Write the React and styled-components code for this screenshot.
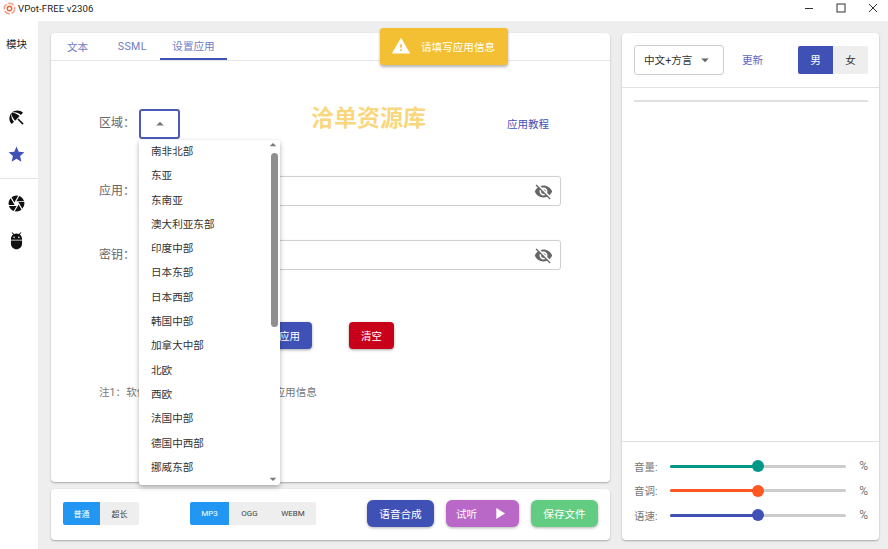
import React from 'react';
import styled, { createGlobalStyle } from 'styled-components';
import { MdBeachAccess, MdStar, MdCamera, MdAdb, MdVisibilityOff, MdWarning, MdPlayArrow, MdArrowDropUp, MdArrowDropDown } from 'react-icons/md';

const Global = createGlobalStyle`
  html, body { margin: 0; padding: 0; height: 100%; overflow: hidden; background: #fff; }
  body { font-family: Roboto, "Noto Sans CJK SC", sans-serif; }
  #root { height: 100%; }
  * { box-sizing: border-box; }
`;

const Win = styled.div`width: 888px; height: 549px; display: flex; flex-direction: column; position: relative; overflow: hidden;`;
const TitleBar = styled.div`height: 21px; flex: none; display: flex; align-items: center; background: #fff; padding: 0 0 5px 3px;`;
const TitleText = styled.span`font: 9.6px Roboto, "Noto Sans", sans-serif; color: #222; margin-left: 2px; letter-spacing: 0.1px;`;
const WinButtons = styled.div`margin-left: auto; display: flex; align-items: center; height: 100%; padding-right: 9px; gap: 21.5px;`;
const Body = styled.div`flex: 1; display: flex; min-height: 0;`;
const Side = styled.aside`width: 38px; flex: none; background: #fff; display: flex; flex-direction: column; align-items: center;`;
const SideTitle = styled.div`font-size: 10.5px; color: #222; margin: 17px 0 0 -5px; height: 60.5px; line-height: 14px;`;
const SideIcon = styled.div`height: 37px; width: 100%; flex: none; display: flex; align-items: center; justify-content: center; padding-right: 5px; color: ${p => p.$c || '#111'}; font-size: 19px;`;
const SideRule = styled.div`width: 100%; height: 1px; background: #e4e4e4; margin: 5px 0 6px;`;
const Content = styled.main`flex: 1; background: #eeeeee; padding: 12px 9px 9px 13px; display: grid; grid-template-columns: 559px 257px; grid-template-rows: 449px 51px; column-gap: 12px; row-gap: 7px;`;
const Card = styled.section`background: #fff; border-radius: 4px; box-shadow: 0 1px 2px rgba(0,0,0,.3);`;
const MainCard = styled(Card)`display: flex; flex-direction: column; position: relative;`;
const Tabs = styled.div`height: 28px; flex: none; display: flex; border-bottom: 1px solid #e6e6e6; padding-left: 4px;`;
const Tab = styled.div`height: 27px; padding: 0 ${p => p.$r}px 1px ${p => p.$l}px; display: flex; align-items: center; font-size: 10.6px; letter-spacing: ${p => p.$ls || 0}px; color: #6f7cc4; border-bottom: ${p => p.$on ? '2px solid #3f51b5' : 'none'};`;
const Form = styled.div`padding: 48px 48px 0 48px; display: flex; flex-direction: column;`;
const Row = styled.div`display: flex; align-items: center; height: 30px; margin-bottom: ${p => p.$mb || 0}px;`;
const Label = styled.label`width: 40px; flex: none; font-size: 12px; color: #666; margin-bottom: ${p => p.$up || 3}px;`;
const RegionBox = styled.div`width: 41px; height: 30px; border: 2px solid #4a5bbd; border-radius: 3px; display: flex; align-items: center; justify-content: center; color: #777; font-size: 18px;`;
const Watermark = styled.div`font-size: 23px; font-weight: 700; color: #f9d77e; margin-left: 131px; margin-top: -10px; line-height: 30px;`;
const Tutorial = styled.a`font-size: 10.5px; color: #3f51b5; margin-left: auto; margin-top: -2px; margin-right: 13px;`;
const Field = styled.div`width: 422px; height: 30px; border: 1px solid #cfcfcf; border-radius: 3px; display: flex; align-items: center; justify-content: flex-end; padding-right: 7px; color: #666; font-size: 19px; box-shadow: 0 0 1px rgba(0,0,0,.15);`;
const Actions = styled.div`display: flex; margin: 52px 0 0 0; padding-left: 0; height: 27px;`;
const PrimaryBtn = styled.button`border: 0; width: 100px; height: 27px; margin-left: 113px; border-radius: 4px; background: #3f51b5; color: #fff; font: 10.5px Roboto, "Noto Sans CJK SC", sans-serif; box-shadow: 0 1px 3px rgba(0,0,0,.35); text-align: right; padding-right: 12px;`;
const DangerBtn = styled.button`border: 0; width: 45px; height: 27px; margin-left: 37px; border-radius: 4px; background: #c8001a; color: #fff; font: 10.5px Roboto, "Noto Sans CJK SC", sans-serif; box-shadow: 0 1px 3px rgba(0,0,0,.35);`;
const Note = styled.p`margin: 36px 0 0; font-size: 10.6px; color: #777; line-height: 16px;`;

const Toast = styled.div`position: absolute; left: 329px; top: -5px; width: 128px; height: 37px; background: #f4c033; border-radius: 3px; box-shadow: 0 2px 3px rgba(0,0,0,.3); color: #fff; display: flex; align-items: center; padding: 0 0 1px 11px; font-size: 10.6px; z-index: 4;`;
const ToastIcon = styled.span`font-size: 20px; display: flex; margin-right: 10px;`;
const Menu = styled.div`position: absolute; left: 88px; top: 107px; width: 141px; height: 345px; background: #fff; border-radius: 3px; box-shadow: 0 2px 5px rgba(0,0,0,.3); z-index: 3; overflow: hidden;`;
const MenuItem = styled.div`height: 24.3px; line-height: 24.3px; padding-left: 12px; font-size: 10.6px; color: #333;`;
const ScrollArrow = styled.span`position: absolute; right: -1px; ${p => p.$up ? 'top: -3px;' : 'bottom: -2px;'} color: #777; font-size: 16px; display: flex;`;
const Thumb = styled.div`position: absolute; right: 2px; top: 13px; width: 7px; height: 174px; background: #8f8f8f; border-radius: 4px;`;

const BottomCard = styled(Card)`display: flex; align-items: center; padding: 0 12px 2px;`;
const Toggle = styled.div`display: flex; height: 23px; margin-right: ${p => p.$mr || 0}px;`;
const ToggleBtn = styled.div`width: ${p => p.$w}px; display: flex; align-items: center; justify-content: center; font-size: 8px; background: ${p => p.$on ? '#2196f3' : '#eeeeee'}; color: ${p => p.$on ? '#fff' : '#444'}; border-radius: ${p => p.$first ? '2px 0 0 2px' : p.$last ? '0 2px 2px 0' : '0'};`;
const ActionBtn = styled.button`border: 0; height: 27px; width: ${p => p.$w}px; margin-left: ${p => p.$ml || 0}px; border-radius: 6px; background: ${p => p.$bg}; color: #fff; display: flex; align-items: center; justify-content: center; font: 10.6px Roboto, "Noto Sans CJK SC", sans-serif; box-shadow: 0 1px 3px rgba(0,0,0,.3); padding: 0;`;
const PlayIcon = styled.span`font-size: 19px; display: flex; margin-left: 13px;`;

const RightCard = styled(Card)`grid-column: 2; grid-row: 1 / span 2; display: flex; flex-direction: column;`;
const RightHead = styled.div`height: 55px; flex: none; display: flex; align-items: center; padding: 0 11px 1px 12px; border-bottom: 1px solid #e2e2e2;`;
const LangSelect = styled.div`width: 90px; height: 30px; border: 1px solid #cfcfcf; border-radius: 3px; display: flex; align-items: center; padding-left: 9px; font-size: 10.6px; color: #333;`;
const Caret = styled.span`margin-left: auto; margin-right: 9px; color: #666; font-size: 18px; display: flex;`;
const Update = styled.a`margin-left: 18px; font-size: 10.6px; color: #5c6bc0;`;
const Gender = styled.div`display: flex; margin-left: auto; height: 28px;`;
const GenderBtn = styled.div`width: 35px; display: flex; align-items: center; justify-content: center; font-size: 10.6px; background: ${p => p.$on ? '#3f51b5' : '#eeeeee'}; color: ${p => p.$on ? '#fff' : '#333'}; border-radius: ${p => p.$on ? '2px 0 0 2px' : '0 2px 2px 0'};`;
const VoiceList = styled.div`flex: 1; padding: 12px 11px 0 12px;`;
const ListRule = styled.div`height: 2px; background: #e0e0e0;`;
const Sliders = styled.div`height: 99px; flex: none; border-top: 1px solid #e2e2e2; padding: 12px 11px 0 12px; display: flex; flex-direction: column;`;
const SliderRow = styled.div`height: 24.5px; display: flex; align-items: center; font-size: 10.5px; color: #777;`;
const SliderLabel = styled.span`width: 36px; flex: none;`;
const Track = styled.div`width: 176px; height: 3px; background: #cccccc; border-radius: 2px; position: relative;`;
const Fill = styled.div`height: 3px; background: ${p => p.$c}; border-radius: 2px; width: 50%;`;
const Knob = styled.div`position: absolute; left: 82px; top: -4.5px; width: 12px; height: 12px; border-radius: 50%; background: ${p => p.$c};`;
const Percent = styled.span`margin-left: auto; font-size: 12px;`;

const regions = ['南非北部','东亚','东南亚','澳大利亚东部','印度中部','日本东部','日本西部','韩国中部','加拿大中部','北欧','西欧','法国中部','德国中西部','挪威东部'];
const sliders = [['音量:', '#009688'], ['音调:', '#ff5722'], ['语速:', '#3f51b5']];

export default function App() {
  return (
    <Win>
      <Global />
      <TitleBar>
        <svg width="13" height="13" viewBox="0 0 13 13" aria-hidden="true">
          <circle cx="6.5" cy="6.5" r="5.2" fill="none" stroke="#f3a08a" strokeWidth="1.5" strokeDasharray="6 1.5" />
          <circle cx="6.5" cy="6.5" r="2.2" fill="none" stroke="#e8623f" strokeWidth="1.4" />
        </svg>
        <TitleText>VPot-FREE v2306</TitleText>
        <WinButtons>
          <svg width="10" height="10" viewBox="0 0 10 10"><path d="M1 5.5h8" stroke="#333" strokeWidth="1" /></svg>
          <svg width="10" height="10" viewBox="0 0 10 10"><rect x="1" y="1" width="8" height="8" fill="none" stroke="#333" strokeWidth="1" /></svg>
          <svg width="12" height="12" viewBox="0 0 12 12"><path d="M2 2l8 8M10 2l-8 8" stroke="#333" strokeWidth="1" /></svg>
        </WinButtons>
      </TitleBar>
      <Body>
        <Side>
          <SideTitle>模块</SideTitle>
          <SideIcon><MdBeachAccess /></SideIcon>
          <SideIcon $c="#3f51b5"><MdStar /></SideIcon>
          <SideRule />
          <SideIcon><MdCamera /></SideIcon>
          <SideIcon><MdAdb /></SideIcon>
        </Side>
        <Content>
          <MainCard>
            <Tabs>
              <Tab $l={12} $r={12.5}>文本</Tab>
              <Tab $l={17} $r={13} $ls={0.4}>SSML</Tab>
              <Tab $on $l={12.5} $r={12.5}>设置应用</Tab>
            </Tabs>
            <Form>
              <Row $mb={37}>
                <Label $up={6}>区域：</Label>
                <RegionBox><MdArrowDropUp /></RegionBox>
                <Watermark>洽单资源库</Watermark>
                <Tutorial>应用教程</Tutorial>
              </Row>
              <Row $mb={34}>
                <Label>应用：</Label>
                <Field><MdVisibilityOff /></Field>
              </Row>
              <Row>
                <Label>密钥：</Label>
                <Field><MdVisibilityOff /></Field>
              </Row>
              <Actions>
                <PrimaryBtn>保存应用</PrimaryBtn>
                <DangerBtn>清空</DangerBtn>
              </Actions>
              <Note>注1：软件需要先联网使用，请先填写应用信息</Note>
            </Form>
            <Toast><ToastIcon><MdWarning /></ToastIcon>请填写应用信息</Toast>
            <Menu>
              {regions.map(r => <MenuItem key={r}>{r}</MenuItem>)}
              <ScrollArrow $up><MdArrowDropUp /></ScrollArrow>
              <Thumb />
              <ScrollArrow><MdArrowDropDown /></ScrollArrow>
            </Menu>
          </MainCard>
          <RightCard>
            <RightHead>
              <LangSelect>中文+方言<Caret><MdArrowDropDown /></Caret></LangSelect>
              <Update>更新</Update>
              <Gender>
                <GenderBtn $on>男</GenderBtn>
                <GenderBtn>女</GenderBtn>
              </Gender>
            </RightHead>
            <VoiceList><ListRule /></VoiceList>
            <Sliders>
              {sliders.map(([l, c]) => (
                <SliderRow key={l}>
                  <SliderLabel>{l}</SliderLabel>
                  <Track><Fill $c={c} /><Knob $c={c} /></Track>
                  <Percent>%</Percent>
                </SliderRow>
              ))}
            </Sliders>
          </RightCard>
          <BottomCard>
            <Toggle $mr={51}>
              <ToggleBtn $on $first $w={37}>普通</ToggleBtn>
              <ToggleBtn $last $w={39}>超长</ToggleBtn>
            </Toggle>
            <Toggle $mr={51}>
              <ToggleBtn $on $first $w={39}>MP3</ToggleBtn>
              <ToggleBtn $w={41}>OGG</ToggleBtn>
              <ToggleBtn $last $w={46}>WEBM</ToggleBtn>
            </Toggle>
            <ActionBtn $w={67} $bg="#3f51b5">语音合成</ActionBtn>
            <ActionBtn $w={73} $ml={12} $bg="#ba68c8">试听<PlayIcon><MdPlayArrow /></PlayIcon></ActionBtn>
            <ActionBtn $w={67} $ml={12} $bg="#62cd82">保存文件</ActionBtn>
          </BottomCard>
        </Content>
      </Body>
    </Win>
  );
}
